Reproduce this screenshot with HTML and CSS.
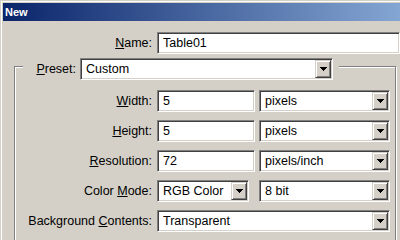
FILE: index.html
```html
<!DOCTYPE html>
<html lang="en">
<head>
    <meta charset="UTF-8">
    <meta name="viewport" content="width=device-width, initial-scale=1.0">
    <title>New</title>
    <link rel="stylesheet" href="styles.css">
</head>
<body>

    <div class="window">
        <div class="titlebar">New</div>
        <div class="dialog">
            <div class="name-row">
                <label class="label name-label"><u>N</u>ame:</label>
                <div class="field name-field"><span class="value">Table01</span></div>
            </div>

            <div class="group">
                <div class="group-head">
                    <label class="label preset-label"><u>P</u>reset:</label>
                    <div class="field select preset-select">
                        <span class="value">Custom</span>
                        <span class="drop"><svg width="7" height="4" viewBox="0 0 7 4"><path d="M0 0h7v1h-1v1h-1v1h-1v1h-1v-1h-1v-1h-1v-1h-1z"/></svg></span>
                    </div>
                </div>

                <div class="rows">
                    <label class="label"><u>W</u>idth:</label>
                    <div class="controls">
                        <div class="field size-field"><span class="value">5</span></div>
                        <div class="field select unit-select">
                            <span class="value">pixels</span>
                            <span class="drop"><svg width="7" height="4" viewBox="0 0 7 4"><path d="M0 0h7v1h-1v1h-1v1h-1v1h-1v-1h-1v-1h-1v-1h-1z"/></svg></span>
                        </div>
                    </div>

                    <label class="label"><u>H</u>eight:</label>
                    <div class="controls">
                        <div class="field size-field"><span class="value">5</span></div>
                        <div class="field select unit-select">
                            <span class="value">pixels</span>
                            <span class="drop"><svg width="7" height="4" viewBox="0 0 7 4"><path d="M0 0h7v1h-1v1h-1v1h-1v1h-1v-1h-1v-1h-1v-1h-1z"/></svg></span>
                        </div>
                    </div>

                    <label class="label"><u>R</u>esolution:</label>
                    <div class="controls">
                        <div class="field size-field"><span class="value">72</span></div>
                        <div class="field select unit-select">
                            <span class="value">pixels/inch</span>
                            <span class="drop"><svg width="7" height="4" viewBox="0 0 7 4"><path d="M0 0h7v1h-1v1h-1v1h-1v1h-1v-1h-1v-1h-1v-1h-1z"/></svg></span>
                        </div>
                    </div>

                    <label class="label">Color <u>M</u>ode:</label>
                    <div class="controls">
                        <div class="field select mode-select">
                            <span class="value">RGB Color</span>
                            <span class="drop"><svg width="7" height="4" viewBox="0 0 7 4"><path d="M0 0h7v1h-1v1h-1v1h-1v1h-1v-1h-1v-1h-1v-1h-1z"/></svg></span>
                        </div>
                        <div class="field select unit-select">
                            <span class="value">8 bit</span>
                            <span class="drop"><svg width="7" height="4" viewBox="0 0 7 4"><path d="M0 0h7v1h-1v1h-1v1h-1v1h-1v-1h-1v-1h-1v-1h-1z"/></svg></span>
                        </div>
                    </div>

                    <label class="label">Background <u>C</u>ontents:</label>
                    <div class="controls">
                        <div class="field select wide-select">
                            <span class="value">Transparent</span>
                            <span class="drop"><svg width="7" height="4" viewBox="0 0 7 4"><path d="M0 0h7v1h-1v1h-1v1h-1v1h-1v-1h-1v-1h-1v-1h-1z"/></svg></span>
                        </div>
                    </div>
                </div>
            </div>
        </div>
    </div>

</body>
</html>
```

FILE: styles.css
```css
html, body {
    margin: 0;
    overflow: hidden;
}
body {
    background: #d4d0c8;
    font-family: "Liberation Sans", Arial, sans-serif;
    font-size: 12.5px;
    color: #000;
}
.window {
    width: 400px;
    height: 240px;
    box-sizing: border-box;
    overflow: hidden;
    padding: 3px 0 0 3px;
    box-shadow: inset 1px 1px 0 #d4d0c8, inset 2px 2px 0 #fff;
}
.titlebar {
    height: 18px;
    padding-left: 2px;
    background: linear-gradient(to right, #0a246a, #84a6d3);
    color: #fff;
    font-weight: bold;
    font-size: 11px;
    line-height: 18px;
}
.dialog {
    padding-top: 11px;
}
.label {
    text-align: right;
    line-height: 22px;
    white-space: nowrap;
}
.name-row {
    display: flex;
    gap: 5px;
}
.name-label {
    width: 149px;
}
.name-field {
    width: 243px;
}

/* sunken edit / combo box */
.field {
    box-sizing: border-box;
    height: 22px;
    display: flex;
    padding: 1px;
    border: 1px solid;
    border-color: #808080 #fff #fff #808080;
    box-shadow: inset 1px 1px 0 #404040, inset -1px -1px 0 #d4d0c8;
    background: #fff;
}
.field .value {
    flex: 1;
    padding-left: 4px;
    line-height: 18px;
    white-space: nowrap;
    overflow: hidden;
}
.drop {
    width: 16px;
    height: 18px;
    box-sizing: border-box;
    display: flex;
    align-items: center;
    justify-content: center;
    padding-left: 1px;
    background: #d4d0c8;
    border: 1px solid;
    border-color: #d4d0c8 #404040 #404040 #d4d0c8;
    box-shadow: inset 1px 1px 0 #fff, inset -1px -1px 0 #808080;
}
.drop svg {
    display: block;
}

/* etched group box, bottom edge lies below the window */
.group {
    margin: 12px 0 0 11px;
    width: 382px;
    height: 190px;
    box-sizing: border-box;
    border: 1px solid #808080;
    box-shadow: inset 1px 1px 0 #fff, 1px 1px 0 #fff;
}
.group-head {
    display: flex;
    gap: 4px;
    width: fit-content;
    margin: -9px 0 0 8px;
    padding-right: 6px;
    background: #d4d0c8;
}
.preset-label {
    width: 53px;
}
.preset-select {
    width: 253px;
}
.rows {
    display: grid;
    grid-template-columns: 137px 233px;
    grid-auto-rows: 22px;
    column-gap: 5px;
    row-gap: 8px;
    margin-top: 10px;
}
.controls {
    display: flex;
    justify-content: space-between;
}
.size-field {
    width: 98px;
}
.unit-select {
    width: 131px;
}
.mode-select {
    width: 92px;
}
.wide-select {
    width: 233px;
}
```
